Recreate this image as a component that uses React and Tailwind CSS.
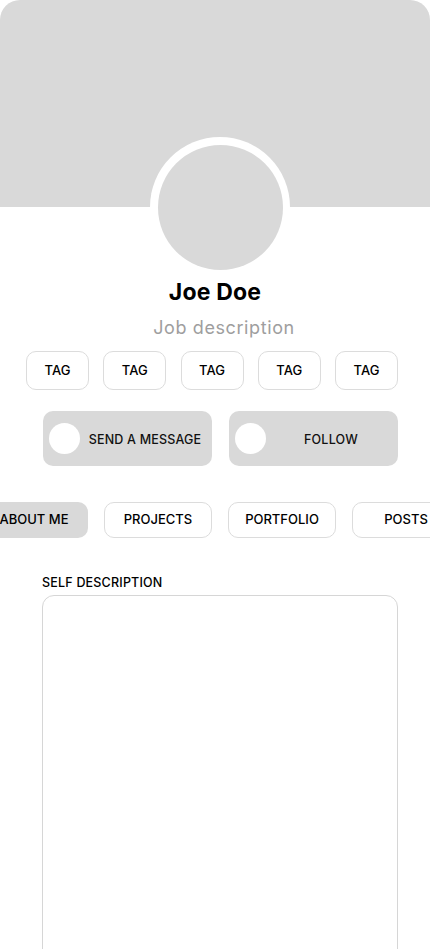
import React from 'react';

const tags = ['TAG', 'TAG', 'TAG', 'TAG', 'TAG'];
const tabs = ['ABOUT ME', 'PROJECTS', 'PORTFOLIO', 'POSTS'];

const ActionButton = ({ label }) => (
    <button className="flex h-[55px] w-[169px] items-center rounded-[10px] bg-[#d9d9d9] pl-[6px]">
        <span className="h-[31px] w-[31px] shrink-0 rounded-full bg-white" />
        <span className="flex-1 pt-[3px] pr-[2px] text-center text-[12.5px] font-medium tracking-[0.2px] text-[#111]">{label}</span>
    </button>
);

const App = () => {
    return (
        <div className="h-[949px] w-[430px] overflow-hidden bg-white font-['Inter',sans-serif] text-black">
            {/* cover + avatar */}
            <div className="relative h-[207px] rounded-t-[20px] bg-[#d9d9d9]">
                <div className="absolute left-[150px] top-[137px] flex h-[140px] w-[140px] items-center justify-center rounded-full bg-white">
                    <div className="h-[125px] w-[125px] rounded-full bg-[#d9d9d9]" />
                </div>
            </div>

            <div className="mt-[70px] flex flex-col items-center">
                <h1 className="text-[23px] font-bold leading-[30px] tracking-[0.2px]">Joe Doe</h1>
                <p className="mt-[9px] pl-[18px] text-[18px] leading-[24px] tracking-[0.6px] text-[#9e9e9e]">Job description</p>
            </div>

            <div className="ml-[26px] mt-[11px] flex w-[372px] justify-between">
                {tags.map((tag, i) => (
                    <div
                        key={i}
                        className="flex h-[39px] w-[63px] items-center justify-center rounded-[10px] border border-[#dcdcdc] text-[13px] font-medium"
                    >
                        {tag}
                    </div>
                ))}
            </div>

            <div className="ml-[43px] mt-[21px] flex gap-[17px]">
                <ActionButton label="SEND A MESSAGE" />
                <ActionButton label="FOLLOW" />
            </div>

            <div className="mt-[36px] overflow-hidden">
                <div className="-ml-[20px] flex gap-[16px]">
                    {tabs.map((tab, i) => (
                        <div
                            key={tab}
                            className={
                                i === 0
                                    ? 'flex h-[36px] w-[108px] shrink-0 items-center justify-center rounded-[10px] bg-[#d9d9d9] text-[13px] font-medium'
                                    : 'flex h-[36px] w-[108px] shrink-0 items-center justify-center rounded-[10px] border border-[#dcdcdc] text-[13px] font-medium'
                            }
                        >
                            {tab}
                        </div>
                    ))}
                </div>
            </div>

            <div className="ml-[42px] mt-[37px] w-[356px]">
                <p className="text-[12.5px] font-medium leading-[16px] tracking-[0.2px]">SELF DESCRIPTION</p>
                <div className="mt-[4px] h-[400px] rounded-[12px] border border-[#d6d6d6]" />
            </div>
        </div>
    );
};

export default App;
